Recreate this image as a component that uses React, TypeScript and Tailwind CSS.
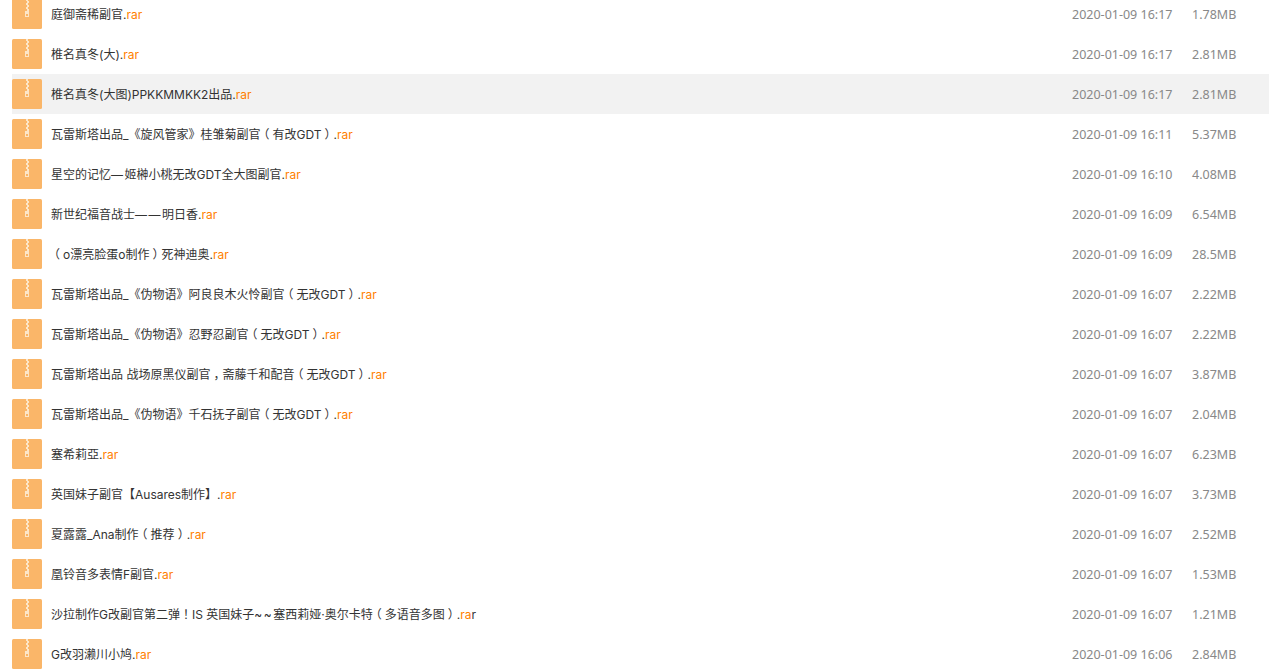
const files = [
  { name: '庭御斋稀副官', date: '2020-01-09 16:17', size: '1.78MB' },
  { name: '椎名真冬(大)', date: '2020-01-09 16:17', size: '2.81MB' },
  { name: '椎名真冬(大图)PPKKMMKK2出品', date: '2020-01-09 16:17', size: '2.81MB', active: true },
  { name: '瓦雷斯塔出品_《旋风管家》桂雏菊副官（有改GDT）', date: '2020-01-09 16:11', size: '5.37MB' },
  { name: '星空的记忆—姬榊小桃无改GDT全大图副官', date: '2020-01-09 16:10', size: '4.08MB' },
  { name: '新世纪福音战士——明日香', date: '2020-01-09 16:09', size: '6.54MB' },
  { name: '（o漂亮脸蛋o制作）死神迪奥', date: '2020-01-09 16:09', size: '28.5MB' },
  { name: '瓦雷斯塔出品_《伪物语》阿良良木火怜副官（无改GDT）', date: '2020-01-09 16:07', size: '2.22MB' },
  { name: '瓦雷斯塔出品_《伪物语》忍野忍副官（无改GDT）', date: '2020-01-09 16:07', size: '2.22MB' },
  { name: '瓦雷斯塔出品 战场原黑仪副官，斋藤千和配音（无改GDT）', date: '2020-01-09 16:07', size: '3.87MB' },
  { name: '瓦雷斯塔出品_《伪物语》千石抚子副官（无改GDT）', date: '2020-01-09 16:07', size: '2.04MB' },
  { name: '塞希莉亞', date: '2020-01-09 16:07', size: '6.23MB' },
  { name: '英国妹子副官【Ausares制作】', date: '2020-01-09 16:07', size: '3.73MB' },
  { name: '夏露露_Ana制作（推荐）', date: '2020-01-09 16:07', size: '2.52MB' },
  { name: '凰铃音多表情F副官', date: '2020-01-09 16:07', size: '1.53MB' },
  { name: '沙拉制作G改副官第二弹！IS 英国妹子~~塞西莉娅·奥尔卡特（多语音多图）', date: '2020-01-09 16:07', size: '1.21MB', splitExt: true },
  { name: 'G改羽濑川小鸠', date: '2020-01-09 16:06', size: '2.84MB' },
];

function ZipIcon() {
  return (
    <svg width="30" height="30" viewBox="0 0 30 30" className="shrink-0">
      <rect width="30" height="30" rx="1.5" fill="#fab669" />
      <path d="M14 0h2v2h-2zM15 2h2v2h-2zM14 4h2v2h-2zM15 6h2v2h-2zM14 8h2v2h-2zM15 10h2v2h-2z" fill="#fde6c8" />
      <path fillRule="evenodd" d="M13 12h4v6h-4zM14 15v2h2v-2z" fill="#fde6c8" />
    </svg>
  );
}

// the fullwidth punctuation sits mid-box in the original font
function FileName({ name }: { name: string }) {
  const parts = name.split(/([（）！，]|~~|—+)/);
  return (
    <>
      {parts.map((p, i) => {
        if (/^[（）！，]$/.test(p)) {
          return (
            <span key={i} className="px-[3px] [font-feature-settings:'halt']">
              {p}
            </span>
          );
        }
        if (p === '~~' || p.startsWith('—')) return <span key={i} className="tracking-[1.5px]">{p}</span>;
        return p;
      })}
    </>
  );
}

export default function App() {
  return (
    <div className="h-[671px] overflow-hidden bg-white pl-3 font-['Inter','Noto_Sans_CJK_SC',sans-serif] text-[12px]">
      <ul className="-mt-[6px]">
        {files.map(f => (
          <li key={f.name} className={`flex h-10 items-center ${f.active ? 'bg-[#f2f2f2]' : ''}`}>
            <ZipIcon />
            <span className="ml-[9px] flex-1 truncate pt-[2px] text-[#333] [text-spacing-trim:space-all]">
              <FileName name={f.name} />.
              {f.splitExt ? (
                <>
                  <span className="text-[#ff7f00]">ra</span>r
                </>
              ) : (
                <span className="text-[#ff7f00]">rar</span>
              )}
            </span>
            <span className="w-[120px] pt-[2px] font-['Noto_Sans',sans-serif] text-[12.5px] text-[#888]">{f.date}</span>
            <span className="w-[77px] pt-[2px] font-['Noto_Sans',sans-serif] text-[12.5px] text-[#888]">{f.size}</span>
          </li>
        ))}
      </ul>
    </div>
  );
}
